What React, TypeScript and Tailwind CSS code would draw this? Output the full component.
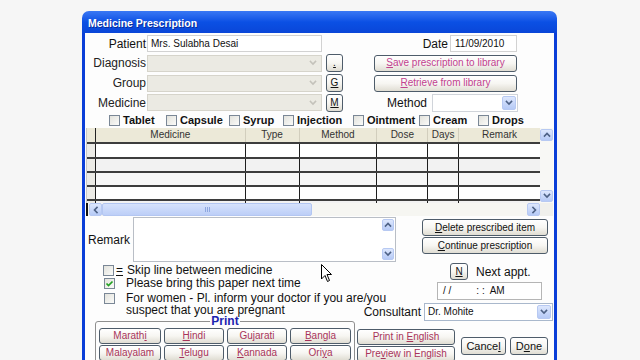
import React from "react";

type ChevDir = "down" | "up" | "left" | "right";

function Chev({ dir = "down", color = "#4d6185" }: { dir?: ChevDir; color?: string }) {
  const pts = {
    down: "1.5,2.5 4,5 6.5,2.5",
    up: "1.5,5 4,2.5 6.5,5",
    left: "5,1.5 2.5,4 5,6.5",
    right: "3,1.5 5.5,4 3,6.5",
  }[dir];
  return (
    <svg width="8" height="8" viewBox="0 0 8 8">
      <polyline points={pts} fill="none" stroke={color} strokeWidth="1.6" strokeLinecap="square" />
    </svg>
  );
}

function ArrowBtn({ dir, className = "" }: { dir: ChevDir; className?: string }) {
  return (
    <div
      className={
        "flex shrink-0 items-center justify-center rounded-[2px] border border-[#b7c9f2] bg-gradient-to-b from-[#dde7fd] to-[#b6caf6] " +
        className
      }
    >
      <Chev dir={dir} />
    </div>
  );
}

function Btn({ children, className = "" }: { children: React.ReactNode; className?: string }) {
  return (
    <div
      className={
        "flex shrink-0 items-center justify-center rounded-[3px] border border-[#4e5c6a] bg-gradient-to-b from-white via-[#f7f6f2] to-[#e0ddd3] text-[10px] leading-none whitespace-nowrap " +
        className
      }
    >
      {children}
    </div>
  );
}

function Box({ checked = false, className = "" }: { checked?: boolean; className?: string }) {
  return (
    <div
      className={
        "w-[11px] h-[11px] shrink-0 border border-[#7a8796] bg-gradient-to-br from-[#e2e2dc] to-[#fbfbf9] flex items-center justify-center " +
        className
      }
    >
      {checked && (
        <svg width="9" height="9" viewBox="0 0 9 9">
          <polyline points="1.5,4.5 3.5,6.5 7.5,2.5" fill="none" stroke="#21a121" strokeWidth="1.7" />
        </svg>
      )}
    </div>
  );
}

function DisCombo() {
  return (
    <div className="ml-[1px] w-[175px] h-[17px] shrink-0 border border-[#d6d4cb] bg-[#ebeae3] flex items-center justify-end pr-[4px]">
      <Chev color="#c4c2bb" />
    </div>
  );
}

const colW = ["w-[9px]", "w-[150px]", "w-[54px]", "w-[78px]", "w-[51px]", "w-[31px]", "w-[81px]"];
const heads = ["", "Medicine", "Type", "Method", "Dose", "Days", "Remark"];
const rowH = ["h-[15px] bg-white", "h-[14px] bg-[#f2f2f2]", "h-[14px] bg-[#f7f7f7]", "h-[14px] bg-white", "h-[4px] bg-[#f2f2f2]"];
const types = [
  { t: "Tablet", w: "w-[57px]" },
  { t: "Capsule", w: "w-[63px]" },
  { t: "Syrup", w: "w-[54px]" },
  { t: "Injection", w: "w-[70px]" },
  { t: "Ointment", w: "w-[66px]" },
  { t: "Cream", w: "w-[59px]" },
  { t: "Drops", w: "w-[50px]" },
];

export default function App() {
  return (
    <div className="relative w-[640px] h-[360px] overflow-hidden bg-[#f6f6f6] pt-[11px] pl-[82px] font-['Liberation_Sans',Arial,sans-serif] text-[#111]">
      <div className="w-[475px] flex flex-col">
        {/* Title bar */}
        <div className="h-[22px] shrink-0 rounded-t-[7px] bg-gradient-to-b from-[#3a78f4] via-[#0b50e4] to-[#0a46d8] flex items-center pl-[6px] pt-[2px]">
          <span className="text-white font-bold text-[10.5px] leading-none [text-shadow:1px_1px_0_#0a2d9a]">
            Medicine Prescription
          </span>
        </div>

        {/* Body */}
        <div className="border-x-[3px] border-[#0a3ed8] bg-[#fdfdfd] flex flex-col">
          {/* Patient row */}
          <div className="mt-[2px] h-[17px] shrink-0 flex items-center">
            <div className="w-[61px] text-right text-[12px] leading-none">Patient</div>
            <div className="ml-[1px] w-[175px] h-[17px] border border-[#d2d2d2] bg-white text-[10px] flex items-center pl-[3px]">
              Mrs. Sulabha Desai
            </div>
            <div className="w-[126px] text-right text-[12px] leading-none">Date</div>
            <div className="ml-[2px] w-[67px] h-[17px] border border-[#d2d2d2] bg-white text-[10px] flex items-center pl-[4px]">
              11/09/2010
            </div>
          </div>

          {/* Diagnosis row */}
          <div className="mt-[2px] h-[18px] shrink-0 flex items-center">
            <div className="w-[61px] text-right text-[12px] leading-none text-[#222]">Diagnosis</div>
            <DisCombo />
            <Btn className="ml-[4px] w-[17px] h-[18px]">
              <span className="underline">.</span>
            </Btn>
            <Btn className="ml-[31px] w-[143px] h-[17px] text-[#c2418f]">
              <span>
                <span className="underline">S</span>ave prescription to library
              </span>
            </Btn>
          </div>

          {/* Group row */}
          <div className="mt-[2px] h-[18px] shrink-0 flex items-center">
            <div className="w-[61px] text-right text-[12px] leading-none text-[#222]">Group</div>
            <DisCombo />
            <Btn className="ml-[4px] w-[17px] h-[18px]">
              <span className="underline">G</span>
            </Btn>
            <Btn className="ml-[31px] w-[143px] h-[17px] text-[#c2418f]">
              <span>
                <span className="underline">R</span>etrieve from library
              </span>
            </Btn>
          </div>

          {/* Medicine row */}
          <div className="mt-[1px] h-[19px] shrink-0 flex items-center">
            <div className="w-[61px] text-right text-[12px] leading-none text-[#222]">Medicine</div>
            <DisCombo />
            <Btn className="ml-[4px] w-[17px] h-[18px]">
              <span className="underline">M</span>
            </Btn>
            <div className="w-[84px] text-right text-[12px] leading-none">Method</div>
            <div className="ml-[5px] w-[86px] h-[18px] border border-[#d0d4da] bg-white flex items-center justify-end pr-[1px]">
              <ArrowBtn dir="down" className="w-[14px] h-[14px]" />
            </div>
          </div>

          {/* Type checkboxes */}
          <div className="h-[16px] shrink-0 flex items-center pl-[24px] text-[11px] font-bold leading-none">
            {types.map((x) => (
              <div key={x.t} className={`${x.w} shrink-0 flex items-center`}>
                <Box />
                <span className="ml-[3px]">{x.t}</span>
              </div>
            ))}
          </div>

          {/* Table */}
          <div className="ml-[1px] w-[467px] h-[88px] shrink-0 flex flex-col">
            <div className="h-[75px] flex">
              <div className="w-[454px] flex flex-col border-l border-[#c8c8c8]">
                <div className="h-[14px] shrink-0 flex bg-[#ece9d8]">
                  {heads.map((h, i) => (
                    <div
                      key={i}
                      className={`${colW[i]} h-full flex items-center justify-center text-[10px] leading-none text-[#333] ${
                        i === 0 ? "border-r border-[#222]" : i < 6 ? "border-r border-[#d2cebd]" : ""
                      }`}
                    >
                      {h}
                    </div>
                  ))}
                </div>
                {rowH.map((r, ri) => (
                  <div key={ri} className={`${r} shrink-0 flex border-t-2 border-[#3d3d3d]`}>
                    {colW.map((w, i) => (
                      <div
                        key={i}
                        className={`${w} h-full ${i < 6 ? "border-r border-[#1e1e1e]" : ""} ${
                          i === 0 ? "bg-[#ecebe6]" : ""
                        }`}
                      />
                    ))}
                  </div>
                ))}
              </div>
              <div className="w-[13px] h-full bg-[#f8f8f5] flex flex-col justify-between py-[1px]">
                <ArrowBtn dir="up" className="w-[13px] h-[12px]" />
                <ArrowBtn dir="down" className="w-[13px] h-[12px]" />
              </div>
            </div>
            <div className="h-[13px] shrink-0 flex">
              <div className="w-[454px] h-full flex items-center bg-[#f6f6f2]">
                <div className="w-[2px] h-full bg-[#111]" />
                <ArrowBtn dir="left" className="ml-[1px] w-[13px] h-[13px]" />
                <div className="w-[210px] h-[13px] rounded-[2px] border border-[#b3c6f1] bg-gradient-to-b from-[#d6e2fc] to-[#bccef7] flex items-center justify-center">
                  <div className="flex gap-[1px]">
                    <div className="w-[1px] h-[5px] bg-[#8ea7e0]" />
                    <div className="w-[1px] h-[5px] bg-[#8ea7e0]" />
                    <div className="w-[1px] h-[5px] bg-[#8ea7e0]" />
                  </div>
                </div>
                <div className="flex-1" />
                <ArrowBtn dir="right" className="w-[13px] h-[13px]" />
              </div>
              <div className="w-[13px] h-full bg-[#f0f0ec]" />
            </div>
          </div>

          {/* Remark */}
          <div className="mt-[1px] h-[46px] shrink-0 flex">
            <div className="w-[48px] pl-[3px] self-center text-[12px] leading-none">Remark</div>
            <div className="w-[263px] h-[45px] border border-[#b9bec6] bg-white flex justify-end">
              <div className="w-[13px] h-full flex flex-col justify-between py-[1px]">
                <ArrowBtn dir="up" className="w-[12px] h-[12px]" />
                <ArrowBtn dir="down" className="w-[12px] h-[12px]" />
              </div>
            </div>
            <div className="ml-[26px] mt-[2px] flex flex-col gap-[1px]">
              <Btn className="w-[126px] h-[17px]">
                <span>
                  <span className="underline">D</span>elete prescribed item
                </span>
              </Btn>
              <Btn className="w-[126px] h-[17px]">
                <span>
                  <span className="underline">C</span>ontinue prescription
                </span>
              </Btn>
            </div>
          </div>

          {/* Bottom A */}
          <div className="h-[58px] shrink-0 flex">
            <div className="w-[275px] flex flex-col text-[12px] leading-[12px] whitespace-nowrap">
              <div className="mt-[1px] h-[12px] flex items-center">
                <Box className="ml-[18px]" />
                <span className="ml-[2px] underline">=</span>
                <span className="ml-[4px]">Skip line between medicine</span>
              </div>
              <div className="mt-[1px] h-[12px] flex items-center">
                <Box checked className="ml-[19px]" />
                <span className="ml-[11px]">Please bring this paper next time</span>
              </div>
              <div className="mt-[3px] flex items-start">
                <Box className="ml-[19px] mt-[1px]" />
                <span className="ml-[11px] relative z-10">
                  For women - Pl. inform your doctor if you are/you
                  <br />
                  suspect that you are pregnant
                </span>
              </div>
            </div>
            <div className="w-[194px] flex flex-col">
              <div className="h-[17px] flex items-center">
                <Btn className="ml-[90px] w-[18px] h-[17px]">
                  <span className="underline">N</span>
                </Btn>
                <span className="ml-[8px] text-[12px] leading-none">Next appt.</span>
              </div>
              <div className="mt-[2px] ml-[77px] w-[105px] h-[19px] border border-[#b5b5b5] bg-white flex items-center pl-[5px] text-[10px] leading-none whitespace-pre">
                {"/ /         : :  AM"}
              </div>
              <div className="mt-[3px] h-[18px] flex items-center">
                <div className="w-[61px] text-right text-[12px] leading-none">Consultant</div>
                <div className="ml-[3px] w-[129px] h-[18px] border border-[#a9b8cc] bg-white flex items-center justify-between pl-[3px] pr-[1px] text-[10px] leading-none">
                  <span>Dr. Mohite</span>
                  <ArrowBtn dir="down" className="w-[14px] h-[14px]" />
                </div>
              </div>
            </div>
          </div>

          {/* Bottom B */}
          <div className="h-[40px] shrink-0 flex items-start">
            <fieldset className="-mt-[7px] ml-[10px] w-[260px] h-[60px] border border-[#8f8f8f] rounded-[3px] p-0 min-w-0">
              <legend className="mx-auto px-[1px] text-[12px] leading-[14px] font-bold text-[#1b22b0]">Print</legend>
              <div className="pl-[3px] flex flex-col gap-[1px] text-[#a8345a]">
                <div className="flex gap-[3px]">
                  <Btn className="w-[62px] h-[16px]">
                    <span>
                      Marath<span className="underline">i</span>
                    </span>
                  </Btn>
                  <Btn className="w-[60px] h-[16px]">
                    <span>
                      <span className="underline">H</span>indi
                    </span>
                  </Btn>
                  <Btn className="w-[60px] h-[16px]">Gujarati</Btn>
                  <Btn className="w-[61px] h-[16px]">
                    <span>
                      <span className="underline">B</span>angla
                    </span>
                  </Btn>
                </div>
                <div className="flex gap-[3px]">
                  <Btn className="w-[62px] h-[16px]">Malayalam</Btn>
                  <Btn className="w-[60px] h-[16px]">
                    <span>
                      <span className="underline">T</span>elugu
                    </span>
                  </Btn>
                  <Btn className="w-[60px] h-[16px]">
                    <span>
                      <span className="underline">K</span>annada
                    </span>
                  </Btn>
                  <Btn className="w-[61px] h-[16px]">
                    <span>
                      Ori<span className="underline">y</span>a
                    </span>
                  </Btn>
                </div>
              </div>
            </fieldset>
            <div className="ml-[2px] mt-[8px] flex flex-col gap-[1px] text-[#a8345a]">
              <Btn className="w-[98px] h-[16px]">
                <span>
                  Print in <span className="underline">E</span>nglish
                </span>
              </Btn>
              <Btn className="w-[98px] h-[16px]">
                <span>
                  Pre<span className="underline">v</span>iew in English
                </span>
              </Btn>
            </div>
            <Btn className="ml-[6px] mt-[16px] w-[45px] h-[18px] text-[11px]">
              <span>
                Cance<span className="underline">l</span>
              </span>
            </Btn>
            <Btn className="ml-[4px] mt-[16px] w-[38px] h-[18px] text-[11px]">
              <span>
                D<span className="underline">o</span>ne
              </span>
            </Btn>
          </div>
        </div>
      </div>

      {/* Mouse cursor */}
      <svg className="absolute left-[321px] top-[264px]" width="12" height="19" viewBox="0 0 12 19">
        <path d="M0.5,0.5 L0.5,15 L4,11.5 L6.5,17.5 L8.5,16.5 L6,10.5 L10.5,10.5 Z" fill="white" stroke="black" strokeWidth="1" />
      </svg>
    </div>
  );
}
